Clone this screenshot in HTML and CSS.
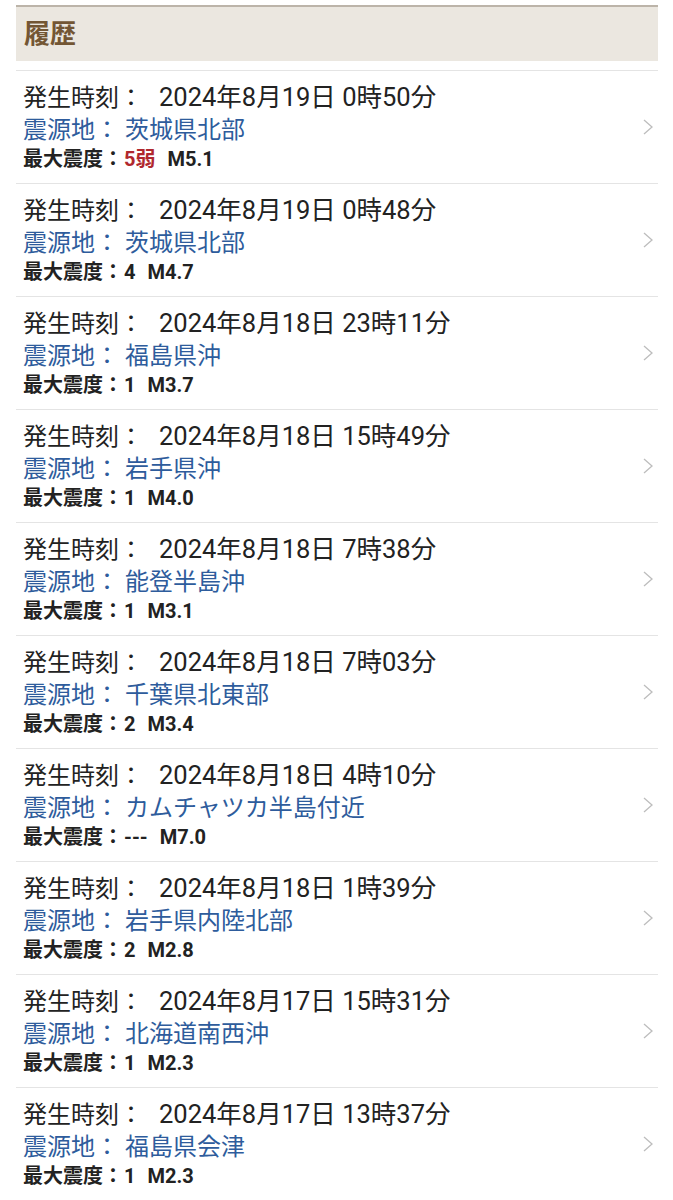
FILE: index.html
```html
<!DOCTYPE html>
<html lang="ja">
<head>
    <meta charset="UTF-8">
    <meta name="viewport" content="width=device-width, initial-scale=1.0">
    <title>履歴</title>
    <link rel="stylesheet" href="styles.css">
</head>
<body>
    <div class="history">
        <h2 class="history-title">履歴</h2>

        <ul class="quake-list">
            <li class="quake">
                <div class="quake-info">
                    <div class="time"><span class="label">発生時刻：</span><span class="value">2024年8月19日 0時50分</span></div>
                    <div class="place">震源地： 茨城県北部</div>
                    <div class="scale">最大震度：<span class="intensity strong">5弱</span><span class="mag">M5.1</span></div>
                </div>
                <svg class="chevron" width="10" height="16" viewBox="0 0 10 16"><polyline points="1,1 9,8 1,15" /></svg>
            </li>
            <li class="quake">
                <div class="quake-info">
                    <div class="time"><span class="label">発生時刻：</span><span class="value">2024年8月19日 0時48分</span></div>
                    <div class="place">震源地： 茨城県北部</div>
                    <div class="scale">最大震度：<span class="intensity">4</span><span class="mag">M4.7</span></div>
                </div>
                <svg class="chevron" width="10" height="16" viewBox="0 0 10 16"><polyline points="1,1 9,8 1,15" /></svg>
            </li>
            <li class="quake">
                <div class="quake-info">
                    <div class="time"><span class="label">発生時刻：</span><span class="value">2024年8月18日 23時11分</span></div>
                    <div class="place">震源地： 福島県沖</div>
                    <div class="scale">最大震度：<span class="intensity">1</span><span class="mag">M3.7</span></div>
                </div>
                <svg class="chevron" width="10" height="16" viewBox="0 0 10 16"><polyline points="1,1 9,8 1,15" /></svg>
            </li>
            <li class="quake">
                <div class="quake-info">
                    <div class="time"><span class="label">発生時刻：</span><span class="value">2024年8月18日 15時49分</span></div>
                    <div class="place">震源地： 岩手県沖</div>
                    <div class="scale">最大震度：<span class="intensity">1</span><span class="mag">M4.0</span></div>
                </div>
                <svg class="chevron" width="10" height="16" viewBox="0 0 10 16"><polyline points="1,1 9,8 1,15" /></svg>
            </li>
            <li class="quake">
                <div class="quake-info">
                    <div class="time"><span class="label">発生時刻：</span><span class="value">2024年8月18日 7時38分</span></div>
                    <div class="place">震源地： 能登半島沖</div>
                    <div class="scale">最大震度：<span class="intensity">1</span><span class="mag">M3.1</span></div>
                </div>
                <svg class="chevron" width="10" height="16" viewBox="0 0 10 16"><polyline points="1,1 9,8 1,15" /></svg>
            </li>
            <li class="quake">
                <div class="quake-info">
                    <div class="time"><span class="label">発生時刻：</span><span class="value">2024年8月18日 7時03分</span></div>
                    <div class="place">震源地： 千葉県北東部</div>
                    <div class="scale">最大震度：<span class="intensity">2</span><span class="mag">M3.4</span></div>
                </div>
                <svg class="chevron" width="10" height="16" viewBox="0 0 10 16"><polyline points="1,1 9,8 1,15" /></svg>
            </li>
            <li class="quake">
                <div class="quake-info">
                    <div class="time"><span class="label">発生時刻：</span><span class="value">2024年8月18日 4時10分</span></div>
                    <div class="place">震源地： カムチャツカ半島付近</div>
                    <div class="scale">最大震度：<span class="intensity">---</span><span class="mag">M7.0</span></div>
                </div>
                <svg class="chevron" width="10" height="16" viewBox="0 0 10 16"><polyline points="1,1 9,8 1,15" /></svg>
            </li>
            <li class="quake">
                <div class="quake-info">
                    <div class="time"><span class="label">発生時刻：</span><span class="value">2024年8月18日 1時39分</span></div>
                    <div class="place">震源地： 岩手県内陸北部</div>
                    <div class="scale">最大震度：<span class="intensity">2</span><span class="mag">M2.8</span></div>
                </div>
                <svg class="chevron" width="10" height="16" viewBox="0 0 10 16"><polyline points="1,1 9,8 1,15" /></svg>
            </li>
            <li class="quake">
                <div class="quake-info">
                    <div class="time"><span class="label">発生時刻：</span><span class="value">2024年8月17日 15時31分</span></div>
                    <div class="place">震源地： 北海道南西沖</div>
                    <div class="scale">最大震度：<span class="intensity">1</span><span class="mag">M2.3</span></div>
                </div>
                <svg class="chevron" width="10" height="16" viewBox="0 0 10 16"><polyline points="1,1 9,8 1,15" /></svg>
            </li>
            <li class="quake">
                <div class="quake-info">
                    <div class="time"><span class="label">発生時刻：</span><span class="value">2024年8月17日 13時37分</span></div>
                    <div class="place">震源地： 福島県会津</div>
                    <div class="scale">最大震度：<span class="intensity">1</span><span class="mag">M2.3</span></div>
                </div>
                <svg class="chevron" width="10" height="16" viewBox="0 0 10 16"><polyline points="1,1 9,8 1,15" /></svg>
            </li>
        </ul>
    </div>
</body>
</html>
```

FILE: styles.css
```css
body {
    margin: 0;
    background-color: #fff;
    font-family: Roboto, "Noto Sans CJK JP", sans-serif;
    color: #222;
}
.history {
    margin: 5px 15px 0 16px;
}
.history-title {
    margin: 0;
    height: 54px;
    line-height: 54px;
    padding: 0 8px;
    border-top: 2px solid #bcb4a9;
    background-color: #ebe7e0;
    color: #735634;
    font-size: 26px;
    font-weight: bold;
}
.quake-list {
    list-style: none;
    margin: 9px 0 0;
    padding: 0;
}
.quake {
    display: flex;
    align-items: center;
    border-top: 1px solid #e4e4e4;
    padding: 12px 5px 12px 7px;
}
.quake-info {
    flex: 1;
}
.time {
    height: 30px;
    font-size: 24px;
    line-height: 30px;
    white-space: nowrap;
}
.time .label {
    margin-right: 16px;
}
.time .value {
    font-size: 25.5px;
    line-height: 24px;
}
.place {
    font-size: 24px;
    line-height: 34px;
    color: #2e5c9c;
    white-space: nowrap;
}
.scale {
    font-size: 20px;
    line-height: 24px;
    font-weight: bold;
    color: #222;
}
.intensity {
    margin-left: 1px;
}
.intensity.strong {
    color: #b0282e;
}
.mag {
    margin-left: 12px;
}
.chevron {
    flex-shrink: 0;
}
.chevron polyline {
    fill: none;
    stroke: #bdbdbd;
    stroke-width: 1.3;
}
```
